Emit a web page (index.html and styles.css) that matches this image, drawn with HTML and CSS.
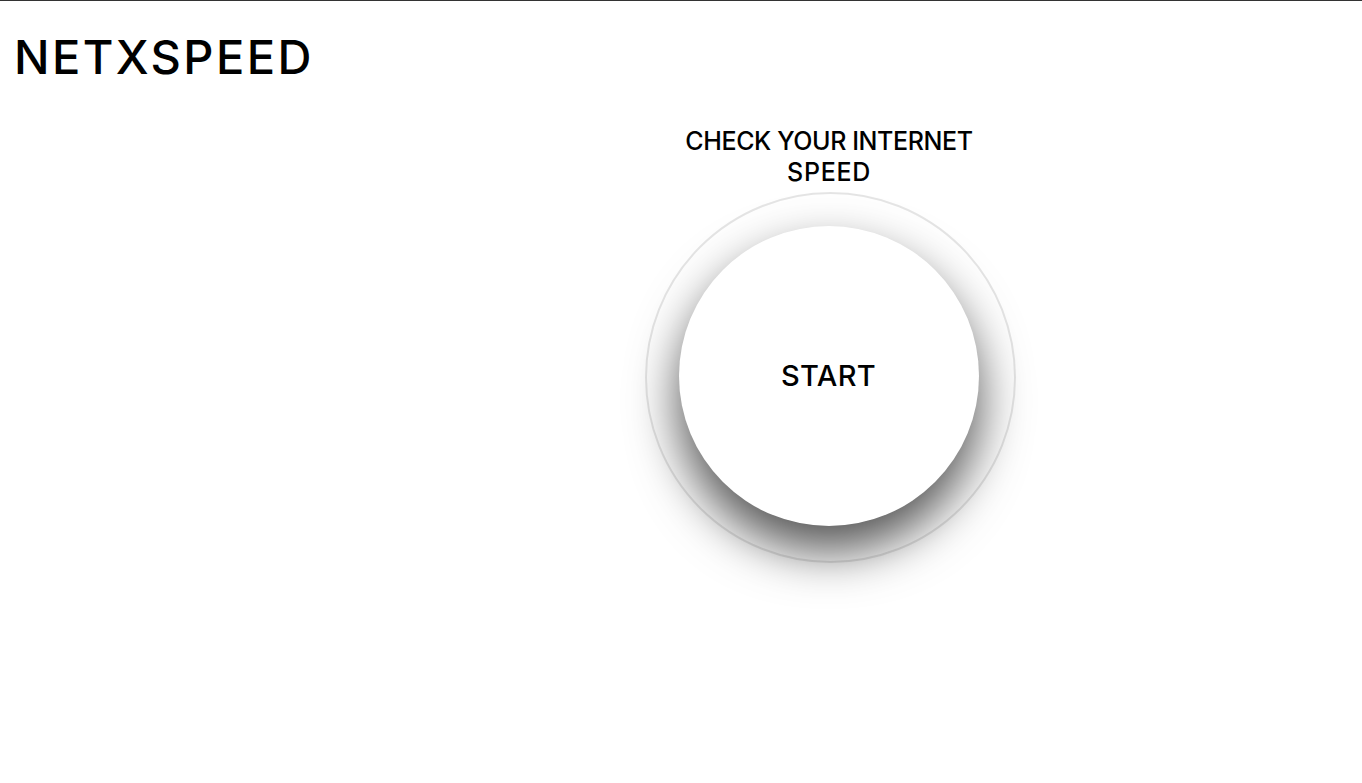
FILE: index.html
```html
<!DOCTYPE html>
<html lang="en">
<head>
<meta charset="utf-8">
<title>NETXSPEED</title>
<link rel="stylesheet" href="styles.css">
</head>
<body>
<header class="header"><h1 class="logo">NETXSPEED</h1></header>
<main class="main">
<h2 class="heading"><span class="line line-top">CHECK YOUR INTERNET</span><span class="line line-bottom">SPEED</span></h2>
<div class="ring"><button class="start" type="button"><span class="start-label">START</span></button></div>
</main>
</body>
</html>
```
FILE: styles.css
```css
* { box-sizing: border-box; }
body {
  margin: 0;
  height: 783px;
  overflow: hidden;
  background: #fff;
  border-top: 1px solid #333;
  color: #000;
  font-family: Inter, "Liberation Sans", sans-serif;
}
.header { height: 125px; padding: 27px 0 0 14px; }
.logo { margin: 0; font-size: 47px; line-height: 58px; font-weight: 500; letter-spacing: 2.4px; width: max-content; }
.main { width: 370px; margin-left: 645px; display: flex; flex-direction: column; align-items: center; }
.heading { margin: 0; height: 66px; width: 368px; align-self: flex-start; display: flex; flex-direction: column; align-items: center; font-size: 25px; font-weight: 500; line-height: 31px; }
.line { white-space: nowrap; }
.line-top { letter-spacing: -.4px; }
.line-bottom { letter-spacing: .7px; }
.ring { width: 371px; height: 371px; border: 2px solid rgba(0,0,0,.1); border-radius: 50%; padding: 32px; }
.start { display: flex; align-items: center; justify-content: center; width: 300px; height: 300px; padding: 0 0 1px; border: 0; border-radius: 50%; background: #fff; color: #000; font: 500 29px Inter, "Liberation Sans", sans-serif; letter-spacing: .3px; box-shadow: 0 25px 50px rgba(0,0,0,.68); }
```
